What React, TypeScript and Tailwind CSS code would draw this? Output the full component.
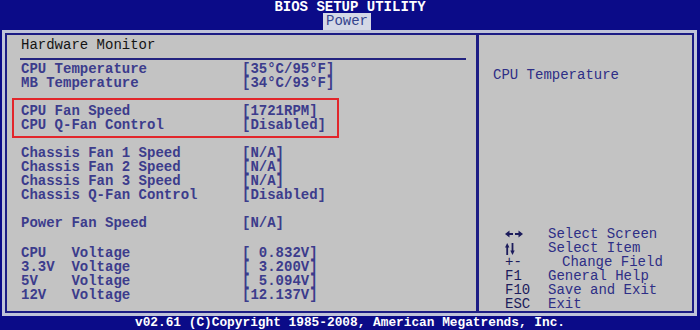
import React from "react";

const mono = "font-['Liberation_Mono','Courier_New',monospace]";

function Row({ label, value, mt = "" }: { label: string; value: string; mt?: string }) {
  return (
    <div className={`flex h-[14px] leading-[14px] whitespace-pre ${mt}`}>
      <span className="w-[221px] shrink-0">{label}</span>
      <span>{value}</span>
    </div>
  );
}

function Help({ k, d, indent = false }: { k: React.ReactNode; d: string; indent?: boolean }) {
  return (
    <div className="flex h-[14px] leading-[14px] whitespace-pre">
      <span className="w-[43px] shrink-0 flex items-center text-[#1c1c5c]">{k}</span>
      <span className={indent ? "pl-[14px]" : ""}>{d}</span>
    </div>
  );
}

function LeftRight() {
  return (
    <svg width="18" height="8" viewBox="0 0 18 8" className="fill-[#1c1c5c]">
      <polygon points="0,4 4.5,0.5 4.5,7.5" />
      <rect x="4" y="3" width="4" height="2" />
      <rect x="10" y="3" width="4" height="2" />
      <polygon points="18,4 13.5,0.5 13.5,7.5" />
    </svg>
  );
}

function UpDown() {
  return (
    <svg width="10" height="12" viewBox="0 0 10 12" className="fill-[#1c1c5c] mt-[1px]">
      <polygon points="2.2,0 0,4.5 4.4,4.5" />
      <rect x="1.3" y="4" width="1.8" height="8" />
      <rect x="6.6" y="0" width="1.8" height="8" />
      <polygon points="7.5,12 5.3,7.5 9.7,7.5" />
    </svg>
  );
}

export default function App() {
  return (
    <div className={`w-[700px] h-[330px] bg-[#0b0b88] flex flex-col overflow-hidden ${mono} text-[14px]`}>
      {/* header */}
      <div className="h-[30px] flex flex-col items-center">
        <div className="h-[13px] leading-[14px] text-white font-bold">BIOS SETUP UTILITY</div>
        <div className="h-[17px] leading-[16px] px-[3px] bg-[#d4d8e6] text-[#34448e] ml-[-6px]">Power</div>
      </div>
      {/* main frame */}
      <div className="ml-[2px] w-[695px] border-[3px] border-[#bfc3d9]">
        <div className="flex h-[280px] border-2 border-[#1c1c84] bg-[#c3c3c3]">
          {/* left panel */}
          <div className="w-[469px] shrink-0 pl-[14px] pt-[3px] text-[#3c3c8c] font-bold">
            <div className="h-[14px] leading-[14px] text-[#141414] font-normal">Hardware Monitor</div>
            <div className="mt-[6px] ml-[-1px] w-[446px] h-[2px] bg-[#23237f]" />
            <div className="mt-[2px]">
              <Row label="CPU Temperature" value="[35°C/95°F]" />
              <Row label="MB Temperature" value="[34°C/93°F]" />
              <div className="mt-[8px] mb-[8px] ml-[-9px] w-[327px] border-2 border-[#e2262b] pl-[7px] py-[4px]">
                <Row label="CPU Fan Speed" value="[1721RPM]" />
                <Row label="CPU Q-Fan Control" value="[Disabled]" />
              </div>
              <Row label="Chassis Fan 1 Speed" value="[N/A]" />
              <Row label="Chassis Fan 2 Speed" value="[N/A]" />
              <Row label="Chassis Fan 3 Speed" value="[N/A]" />
              <Row label="Chassis Q-Fan Control" value="[Disabled]" />
              <Row label="Power Fan Speed" value="[N/A]" mt="mt-[14px]" />
              <Row label="CPU   Voltage" value="[ 0.832V]" mt="mt-[16px]" />
              <Row label="3.3V  Voltage" value="[ 3.200V]" />
              <Row label="5V    Voltage" value="[ 5.094V]" />
              <Row label="12V   Voltage" value="[12.137V]" />
            </div>
          </div>
          {/* divider */}
          <div className="w-[3px] shrink-0 bg-[#1c1c84]" />
          {/* right panel */}
          <div className="flex-1 flex flex-col justify-between pl-[14px] pt-[33px] text-[#2e2e86]">
            <div className="h-[14px] leading-[14px]">CPU Temperature</div>
            <div className="pl-[12px]">
              <Help k={<LeftRight />} d="Select Screen" />
              <Help k={<UpDown />} d="Select Item" />
              <Help k="+-" d="Change Field" indent />
              <Help k="F1" d="General Help" />
              <Help k="F10" d="Save and Exit" />
              <Help k="ESC" d="Exit" />
            </div>
          </div>
        </div>
      </div>
      {/* footer */}
      <div className="flex-1 flex items-center justify-center text-white font-bold text-[12.8px] leading-[12px] pb-[1px]">
        <span className="whitespace-pre">v02.61 (C)Copyright 1985-2008, American Megatrends, Inc.</span>
      </div>
    </div>
  );
}
